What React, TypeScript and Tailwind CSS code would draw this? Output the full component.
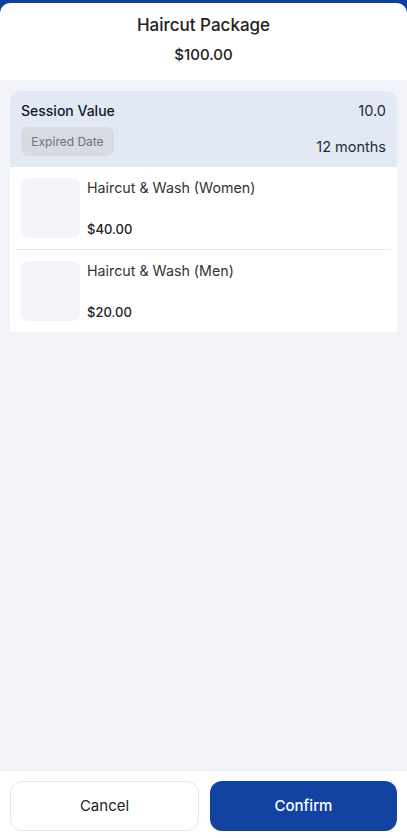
const items = [
  { name: 'Haircut & Wash (Women)', price: '$40.00' },
  { name: 'Haircut & Wash (Men)', price: '$20.00' },
];

export default function App() {
  return (
    <div
      className="h-[838px] w-full bg-[#0b41a2] pt-[3px] flex flex-col"
      style={{ fontFamily: 'Inter, "Noto Sans", sans-serif' }}
    >
      <div className="flex-1 flex flex-col bg-white rounded-t-[10px] overflow-hidden">
        {/* Header */}
        <div className="h-[77px] flex flex-col items-center pt-[10px]">
          <h1 className="text-[17px] leading-[24px] font-medium text-[#222]">Haircut Package</h1>
          <p className="mt-[8px] text-[15px] leading-[20px] font-medium text-[#222]">$100.00</p>
        </div>

        {/* Body */}
        <div className="flex-1 bg-[#f2f4f9] px-[10px] pt-[11px]">
          <div className="rounded-t-[10px] overflow-hidden">
            <div className="bg-[#e3e9f4] px-[11px] pt-[10px] pb-[10px] flex justify-between">
              <div className="flex flex-col">
                <span className="text-[14px] leading-[20px] font-medium text-[#111827]">Session Value</span>
                <span className="mt-[6px] w-[93px] h-[29px] rounded-lg bg-[#d7dbe2] flex items-center justify-center text-[12px] text-[#6b7280]">
                  Expired Date
                </span>
              </div>
              <div className="flex flex-col items-end">
                <span className="text-[14.5px] leading-[20px] text-[#1f2937]">10.0</span>
                <span className="mt-[16px] text-[14.5px] leading-[20px] text-[#1f2937]">12 months</span>
              </div>
            </div>
            <div className="bg-white px-[6px]">
              {items.map((item, i) => (
                <div
                  key={item.name}
                  className={
                    'flex gap-[7px] pl-[5px] pt-[11px] pb-[11px] ' +
                    (i < items.length - 1 ? 'border-b border-[#e8eaee]' : '')
                  }
                >
                  <div className="w-[59px] h-[60px] rounded-lg bg-[#f2f4f9]" />
                  <div className="flex flex-col justify-between h-[60px]">
                    <span className="text-[14.25px] leading-[20px] text-[#333]">{item.name}</span>
                    <span className="text-[13px] leading-[18px] font-medium text-[#222]">{item.price}</span>
                  </div>
                </div>
              ))}
            </div>
          </div>
        </div>

        {/* Footer */}
        <div className="border-t border-[#e8eaee] bg-white px-[10px] pt-[10px] pb-[7px] flex gap-[11px]">
          <button
            type="button"
            className="flex-1 h-[50px] rounded-xl border border-[#e5e7eb] bg-white text-[15px] text-[#222]"
          >
            Cancel
          </button>
          <button
            type="button"
            className="flex-1 h-[50px] rounded-xl bg-[#1343a1] text-[15px] font-medium text-white"
          >
            Confirm
          </button>
        </div>
      </div>
    </div>
  );
}
